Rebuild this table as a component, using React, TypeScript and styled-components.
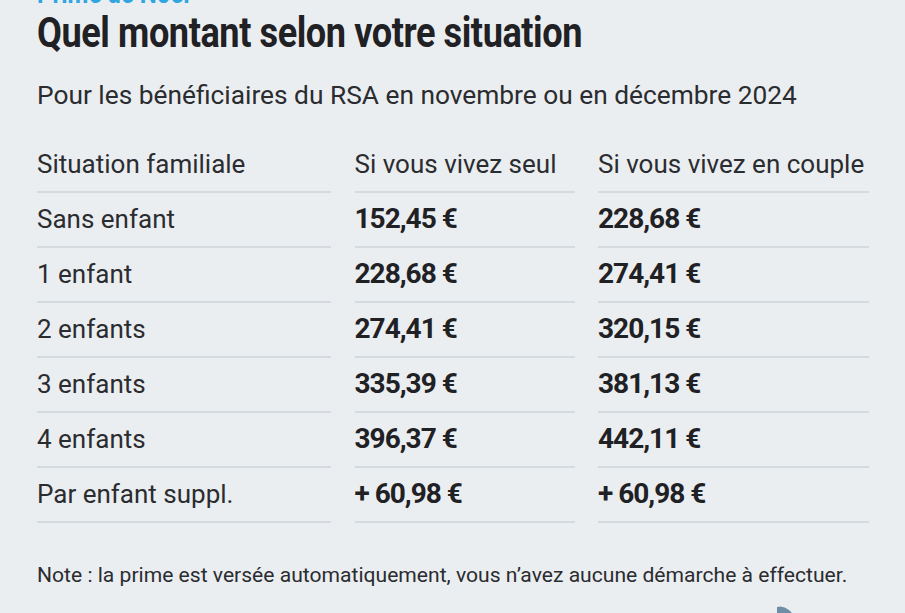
import React from 'react';
import styled, { createGlobalStyle } from 'styled-components';

const GlobalStyle = createGlobalStyle`
  html, body {
    margin: 0;
    padding: 0;
    background: #ebeef1;
  }
  body {
    font-family: Roboto, "Liberation Sans", sans-serif;
    color: #26282b;
    overflow: hidden;
  }
`;

const Page = styled.div`
  width: 905px;
  height: 613px;
  box-sizing: border-box;
  padding-left: 37px;
  background: #ebeef1;
  overflow: hidden;
  position: relative;
`;

// the section kicker is cut by the top edge of the crop
const Kicker = styled.div`
  margin-top: -22px;
  height: 30px;
  font-size: 30px;
  line-height: 30px;
  font-weight: 700;
  color: #2fa6df;
  transform: scaleX(0.8);
  transform-origin: left center;
  white-space: nowrap;
`;

const Title = styled.h1`
  margin: 0;
  font-size: 42px;
  line-height: 50px;
  font-weight: 700;
  color: #1f2124;
  letter-spacing: -0.5px;
  transform: scaleX(0.86);
  transform-origin: left center;
  white-space: nowrap;
`;

const Subtitle = styled.p`
  margin: 22px 0 0;
  font-size: 26.3px;
  line-height: 30px;
  font-weight: 400;
  color: #2a2c2f;
  white-space: nowrap;
`;

const Table = styled.div`
  margin-top: 28px;
  display: grid;
  grid-template-columns: 294px 220px 271px;
  column-gap: 23.5px;
`;

const Cell = styled.div<{ $bold?: boolean }>`
  height: 53px;
  line-height: 52px;
  border-bottom: 2px solid #d5dade;
  font-size: ${p => (p.$bold ? '28px' : '26px')};
  font-weight: ${p => (p.$bold ? 700 : 400)};
  letter-spacing: ${p => (p.$bold ? '-1px' : '0')};
  color: ${p => (p.$bold ? '#1f2124' : '#2a2c2f')};
  white-space: nowrap;
`;

const Note = styled.p`
  margin: 39px 0 0;
  font-size: 21.1px;
  line-height: 26px;
  color: #2a2c2f;
  white-space: nowrap;
`;

const Corner = styled.svg`
  position: absolute;
  left: 775px;
  top: 604px;
`;

const rows = [
  ['Sans enfant', '152,45 €', '228,68 €'],
  ['1 enfant', '228,68 €', '274,41 €'],
  ['2 enfants', '274,41 €', '320,15 €'],
  ['3 enfants', '335,39 €', '381,13 €'],
  ['4 enfants', '396,37 €', '442,11 €'],
  ['Par enfant suppl.', '+ 60,98 €', '+ 60,98 €'],
];

export default function App() {
  return (
    <Page>
      <GlobalStyle />
      <Kicker>Prime de Noël</Kicker>
      <Title>Quel montant selon votre situation</Title>
      <Subtitle>Pour les bénéficiaires du RSA en novembre ou en décembre 2024</Subtitle>
      <Table>
        <Cell>Situation familiale</Cell>
        <Cell>Si vous vivez seul</Cell>
        <Cell>Si vous vivez en couple</Cell>
        {rows.map(r => (
          <React.Fragment key={r[0]}>
            <Cell>{r[0]}</Cell>
            <Cell $bold>{r[1]}</Cell>
            <Cell $bold>{r[2]}</Cell>
          </React.Fragment>
        ))}
      </Table>
      <Note>Note : la prime est versée automatiquement, vous n’avez aucune démarche à effectuer.</Note>
      <Corner width="20" height="10" viewBox="0 0 20 10">
        <path d="M2 10 L2 3 Q8 1 14 6 L18 10 Z" fill="#6f8ea6" />
      </Corner>
    </Page>
  );
}
